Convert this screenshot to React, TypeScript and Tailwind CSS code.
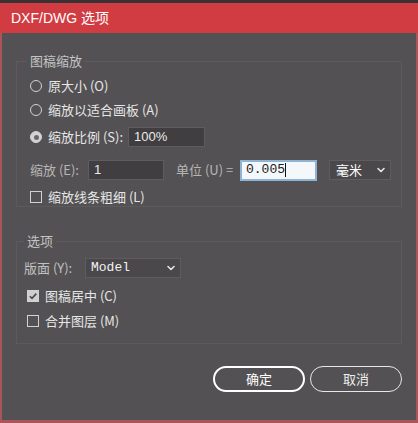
import { FC, ReactNode } from "react";

const cjk = "font-['Noto_Sans_CJK_SC','Liberation_Sans',sans-serif]";
const mono = "font-['Liberation_Mono','Noto_Sans_CJK_SC',monospace]";

const Chevron = () => (
  <svg width="10" height="10" viewBox="0 0 10 10" className="stroke-[#e6e6e6]" fill="none">
    <path d="M2 3.5 L5 6.5 L8 3.5" strokeWidth="1.6" strokeLinecap="round" strokeLinejoin="round" />
  </svg>
);

const Radio: FC<{ checked?: boolean }> = ({ checked }) => (
  <span
    className={`w-[12px] h-[12px] rounded-full border border-[#d2d2d2] flex items-center justify-center ${
      checked ? "bg-[#d4d4d4]" : ""
    }`}
  >
    {checked && <span className="w-[5px] h-[5px] rounded-full bg-[#6a686a]" />}
  </span>
);

const Check: FC<{ checked?: boolean }> = ({ checked }) => (
  <span
    className={`w-[12px] h-[12px] border border-[#d2d2d2] flex items-center justify-center ${
      checked ? "bg-[#cfcfcf]" : ""
    }`}
  >
    {checked && (
      <svg width="10" height="10" viewBox="0 0 10 10" fill="none" className="stroke-[#4a484a]">
        <path d="M1.8 5.2 L4 7.4 L8.3 2.6" strokeWidth="1.6" />
      </svg>
    )}
  </span>
);

const Row: FC<{ h: string; children: ReactNode }> = ({ h, children }) => (
  <div className={`flex items-center ${h}`}>{children}</div>
);

const App = () => {
  return (
    <div className={`w-[418px] h-[423px] flex flex-col bg-[#3a3335] ${cjk} text-[13px]`}>
      <div className="h-[3px] bg-[#3a3234]" />
      <div className="h-[30px] bg-[#d13c43] flex items-center px-[11px] text-white text-[14px] font-['Liberation_Sans','Noto_Sans_CJK_SC',sans-serif]">
        DXF/DWG 选项
      </div>
      <div className="flex-1 flex flex-col bg-[#535153] border-l-[2px] border-r-[2px] border-b-[3px] border-[#a9555a] px-[14px]">
        <fieldset className="mt-[19px] border border-[#5c5a5c] pl-[10px] pr-[10px]">
          <legend className="px-[3px] h-[18px] leading-[18px] text-[#c4c4c4]">图稿缩放</legend>
          <div className="pt-[4px] pl-[3px] text-[#e6e6e6]">
            <Row h="h-[24px]">
              <Radio />
              <span className="ml-[6px]">原大小 (O)</span>
            </Row>
            <Row h="h-[24px]">
              <Radio />
              <span className="ml-[6px]">缩放以适合画板 (A)</span>
            </Row>
            <Row h="h-[30px]">
              <Radio checked />
              <span className="ml-[6px]">缩放比例 (S):</span>
              <div className="ml-[5px] w-[77px] h-[20px] bg-[#403e40] border border-[#5e5c5e] flex items-center px-[5px] text-[#ececec] font-['Liberation_Sans',sans-serif]">
                100%
              </div>
            </Row>
            <Row h="h-[36px]">
              <span className="text-[#b6b6b6] w-[58px]">缩放 (E):</span>
              <div className="w-[76px] h-[20px] bg-[#403e40] border border-[#5e5c5e] flex items-center px-[5px] text-[#ececec] font-['Liberation_Sans',sans-serif]">
                1
              </div>
              <span className="ml-[12px] text-[#b6b6b6] w-[64px]">单位 (U) =</span>
              <div className={`w-[77px] h-[21px] bg-[#f5f8fb] border-[2px] border-[#8fb3d3] flex items-center px-[4px] text-[#202020] ${mono}`}>
                0.005
                <span className="w-px h-[14px] bg-[#111]" />
              </div>
              <div className="ml-[12px] w-[62px] h-[20px] bg-[#4a484a] border border-[#5e5c5e] flex items-center justify-between pl-[6px] pr-[4px] text-white">
                毫米
                <Chevron />
              </div>
            </Row>
            <Row h="h-[18px]">
              <Check />
              <span className="ml-[6px]">缩放线条粗细 (L)</span>
            </Row>
          </div>
        </fieldset>

        <fieldset className="mt-[26px] border border-[#5c5a5c] pl-[7px] pr-[10px] pb-[9px]">
          <legend className="px-[3px] h-[16px] leading-[16px] text-[#c4c4c4]">选项</legend>
          <div className="pt-[7px] text-[#e6e6e6]">
            <Row h="h-[24px]">
              <span className="text-[#c0c0c0] w-[61px]">版面 (Y):</span>
              <div className={`w-[96px] h-[20px] bg-[#4a484a] border border-[#5e5c5e] flex items-center justify-between pl-[5px] pr-[4px] text-[#f2f2f2] ${mono}`}>
                Model
                <Chevron />
              </div>
            </Row>
            <div className="h-[4px]" />
            <Row h="h-[24px]">
              <span className="ml-[3px]">
                <Check checked />
              </span>
              <span className="ml-[6px]">图稿居中 (C)</span>
            </Row>
            <Row h="h-[26px]">
              <span className="ml-[3px]">
                <Check />
              </span>
              <span className="ml-[6px]">合并图层 (M)</span>
            </Row>
          </div>
        </fieldset>

        <div className="mt-[22px] flex justify-end gap-[5px]">
          <button className="w-[92px] h-[26px] rounded-full border-[2px] border-white text-white text-[13px]">
            确定
          </button>
          <button className="w-[92px] h-[26px] rounded-full border-[1.5px] border-[#e8e8e8] text-[#eeeeee] text-[13px]">
            取消
          </button>
        </div>
      </div>
    </div>
  );
};

export default App;
